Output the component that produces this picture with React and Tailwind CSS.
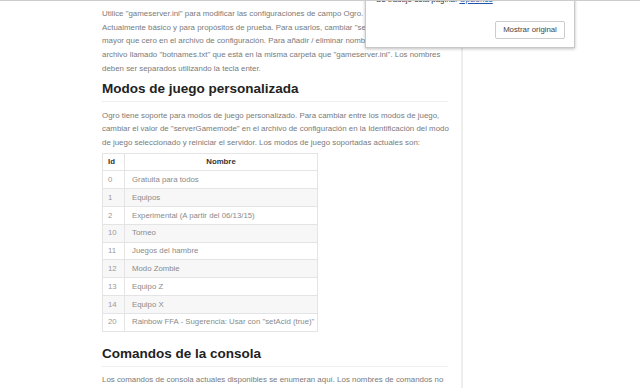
import React from "react";

const rows = [
  ["0", "Gratuita para todos"],
  ["1", "Equipos"],
  ["2", "Experimental (A partir del 06/13/15)"],
  ["10", "Torneo"],
  ["11", "Juegos del hambre"],
  ["12", "Modo Zombie"],
  ["13", "Equipo Z"],
  ["14", "Equipo X"],
  ["20", "Rainbow FFA - Sugerencia: Usar con \"setAcid (true)\""],
];

export default function App() {
  return (
    <div
      className="relative w-[640px] h-[388px] overflow-hidden bg-white border-t border-[#cccccc]"
      style={{ fontFamily: '"Liberation Sans", Arial, sans-serif' }}
    >
      <div className="ml-[90px] w-[373px] h-[400px] border-r-2 border-[#eeeeee] pl-[12px] pr-[13px] pt-[6px]">
        <p className="text-[7.9px] leading-[13.7px] text-[#7a7a7a] whitespace-nowrap">
          Utilice "gameserver.ini" para modificar las configuraciones de campo Ogro. Bots están
          <br />
          Actualmente básico y para propósitos de prueba. Para usarlos, cambiar "serverBots" a un valor
          <br />
          mayor que cero en el archivo de configuración. Para añadir / eliminar nombres de bots, editar el
          <br />
          archivo llamado "botnames.txt" que está en la misma carpeta que "gameserver.ini". Los nombres
          <br />
          deben ser separados utilizando la tecla enter.
        </p>
        <h2 className="mt-[5px] pb-[4px] border-b border-[#eeeeee] text-[13.5px] leading-[16px] font-bold text-[#222222]">
          Modos de juego personalizada
        </h2>
        <p className="mt-[7px] text-[7.9px] leading-[13.7px] text-[#7a7a7a] whitespace-nowrap">
          Ogro tiene soporte para modos de juego personalizado. Para cambiar entre los modos de juego,
          <br />
          cambiar el valor de "serverGamemode" en el archivo de configuración en la Identificación del modo
          <br />
          de juego seleccionado y reiniciar el servidor. Los modos de juego soportadas actuales son:
        </p>
        <table className="mt-[3px] w-[216px] border-collapse border border-[#e4e4e4] text-[7.8px]">
          <thead>
            <tr className="h-[17.8px]">
              <th className="border border-[#e4e4e4] w-[22px] pl-[5px] text-left font-bold text-[#333333]">Id</th>
              <th className="border border-[#e4e4e4] text-center font-bold text-[#333333]">Nombre</th>
            </tr>
          </thead>
          <tbody>
            {rows.map(([id, name], i) => (
              <tr key={id} className={i % 2 === 1 ? "h-[17.8px] bg-[#f7f7f7]" : "h-[17.8px] bg-white"}>
                <td className="border border-[#e4e4e4] pl-[5px] text-[#9a9a9a]">{id}</td>
                <td className="border border-[#e4e4e4] pl-[7px] text-[#8a8a8a] whitespace-nowrap">{name}</td>
              </tr>
            ))}
          </tbody>
        </table>
        <h2 className="mt-[14px] pb-[4px] border-b border-[#eeeeee] text-[13.5px] leading-[16px] font-bold text-[#222222]">
          Comandos de la consola
        </h2>
        <p className="mt-[6px] text-[7.9px] leading-[13.7px] text-[#7a7a7a] whitespace-nowrap">
          Los comandos de consola actuales disponibles se enumeran aquí. Los nombres de comandos no
          <br />
          distinguen entre mayúsculas y minúsculas y se pueden escribir en la consola.
        </p>
      </div>

      <div className="absolute left-[365px] top-[-12px] w-[210px] h-[59px] bg-white border border-[#c8c8c8] shadow-[0_1px_3px_rgba(0,0,0,0.25)]">
        <div className="pl-[10px] pt-[5px] text-[7.9px] leading-[10px] text-[#333333] whitespace-nowrap">
          Se tradujo esta página.{" "}
          <span className="underline text-[#2255aa]">Opciones</span>
        </div>
        <div className="flex justify-end pr-[9px] mt-[16px]">
          <div className="w-[70px] h-[18px] flex items-center justify-center border border-[#cccccc] rounded-[2px] bg-white text-[7.8px] text-[#444444]">
            Mostrar original
          </div>
        </div>
      </div>
    </div>
  );
}
